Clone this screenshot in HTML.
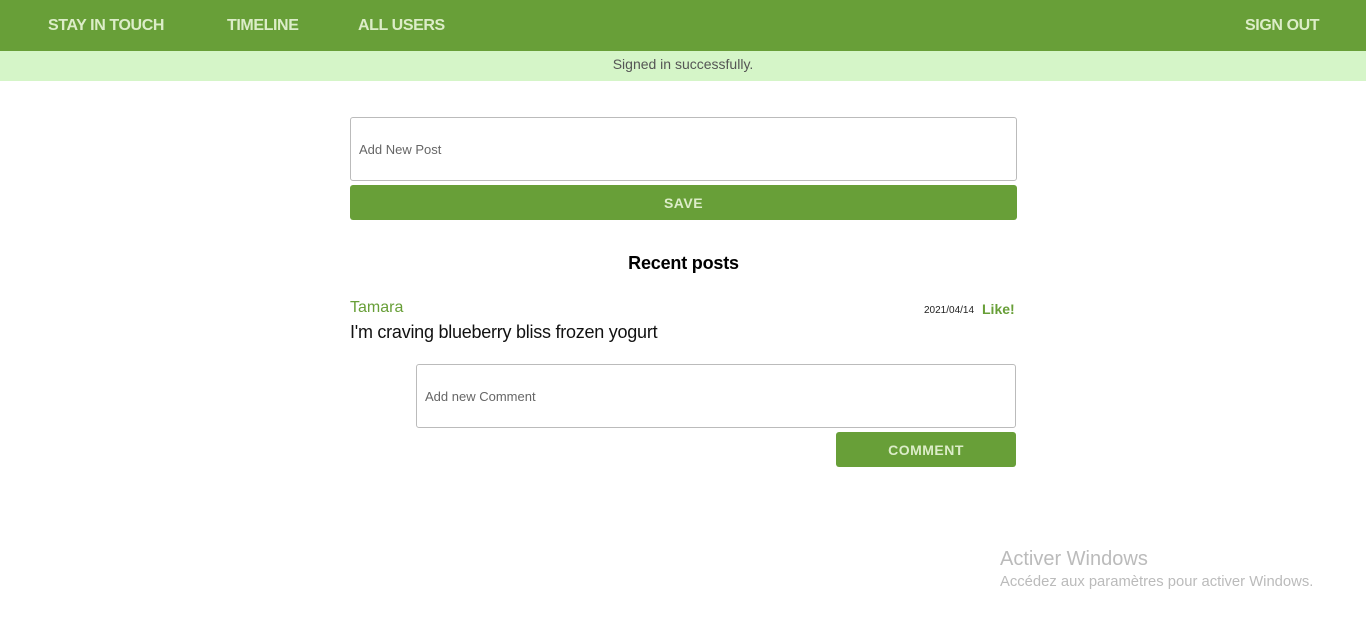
<!DOCTYPE html>
<html><head><style>
body{margin:0;width:1366px;height:625px;background:#fff;font-family:"Liberation Sans",sans-serif;position:relative;overflow:hidden}
.nav{position:absolute;left:0;top:0;width:1366px;height:51px;background:#689f38}
.nav a{position:absolute;top:17px;color:#dcedc8;font-weight:bold;font-size:16px;letter-spacing:-0.4px}
.flash{position:absolute;top:51px;left:0;width:1366px;height:30px;background:#d5f5c8;text-align:center;line-height:27px;font-size:14px;color:#555}
.in{position:absolute;border:1px solid #bbb;border-radius:3px;box-sizing:border-box;font-size:13px;color:#666;padding-left:8px}
.btn{position:absolute;background:#689f38;color:#dcedc8;font-weight:bold;font-size:14px;text-align:center;border-radius:3px;letter-spacing:0.5px}
</style></head><body>
<div class="nav"><a style="left:48px">STAY IN TOUCH</a><a style="left:227px">TIMELINE</a><a style="left:358px">ALL USERS</a><a style="left:1245px">SIGN OUT</a></div>
<div class="flash">Signed in successfully.</div>
<div class="in" style="left:350px;top:117px;width:667px;height:64px;line-height:63px">Add New Post</div>
<div class="btn" style="left:350px;top:185px;width:667px;height:35px;line-height:36px">SAVE</div>
<div style="position:absolute;left:350px;width:667px;top:253px;text-align:center;font-weight:bold;font-size:18px;letter-spacing:-0.2px">Recent posts</div>
<div style="position:absolute;left:350px;top:299px;font-size:16px;color:#689f38">Tamara</div>
<div style="position:absolute;left:924px;top:305px;font-size:10px;color:#222">2021/04/14</div>
<div style="position:absolute;left:982px;top:301px;font-size:14px;font-weight:bold;color:#689f38">Like!</div>
<div style="position:absolute;left:350px;top:322px;font-size:18px;color:#111;letter-spacing:-0.25px">I'm craving blueberry bliss frozen yogurt</div>
<div class="in" style="left:416px;top:364px;width:600px;height:64px;line-height:63px">Add new Comment</div>
<div class="btn" style="left:836px;top:432px;width:180px;height:35px;line-height:36px">COMMENT</div>
<div style="position:absolute;left:1000px;top:548px;font-size:20px;color:#bbb">Activer Windows</div>
<div style="position:absolute;left:1000px;top:574px;font-size:14.8px;color:#bbb">Accédez aux paramètres pour activer Windows.</div>
</body></html>
